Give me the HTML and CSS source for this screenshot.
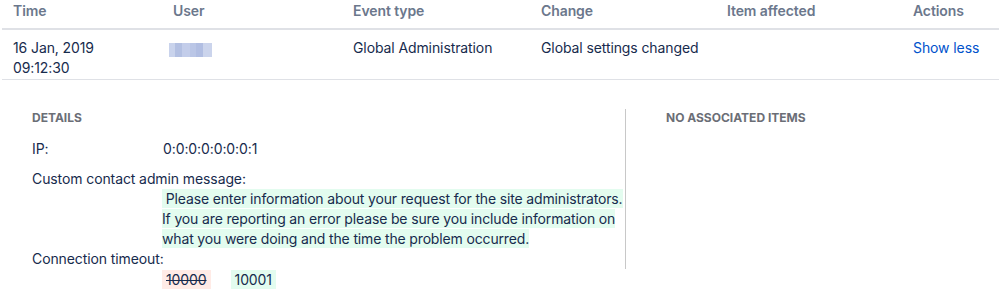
FILE: index.html
```html
<!DOCTYPE html>
<html lang="en">
<head>
  <meta charset="UTF-8" />
  <meta name="viewport" content="width=device-width,initial-scale=1.0" />
  <title>Audit log</title>
  <link rel="stylesheet" href="styles.css">
</head>
<body>
  <table class="audit">
    <thead>
      <tr>
        <th class="col-time">Time</th>
        <th class="col-user">User</th>
        <th class="col-type">Event type</th>
        <th class="col-change">Change</th>
        <th class="col-item">Item affected</th>
        <th class="col-actions">Actions</th>
      </tr>
    </thead>
    <tbody>
      <tr class="entry">
        <td>16 Jan, 2019<br>09:12:30</td>
        <td><span class="blurred" aria-label="hidden user"></span></td>
        <td>Global Administration</td>
        <td>Global settings changed</td>
        <td></td>
        <td><a href="#" class="toggle">Show less</a></td>
      </tr>
    </tbody>
  </table>

  <section class="details">
    <div class="details-main">
      <h2>Details</h2>
      <dl>
        <div class="field inline">
          <dt>IP:</dt>
          <dd>0:0:0:0:0:0:0:1</dd>
        </div>
        <div class="field">
          <dt>Custom contact admin message:</dt>
          <dd class="message"><span class="added">&nbsp;Please enter information about your request for the site administrators.<br>If you are reporting an error please be sure you include information on<br>what you were doing and the time the problem occurred.</span></dd>
        </div>
        <div class="field">
          <dt>Connection timeout:</dt>
          <dd class="diff"><del class="removed">10000</del><span class="added">10001</span></dd>
        </div>
      </dl>
    </div>
    <div class="divider"></div>
    <div class="details-side">
      <h2>No associated items</h2>
    </div>
  </section>
</body>
</html>
```

FILE: styles.css
```css
body {
  margin: 0;
  background: #ffffff;
  color: #172b4d;
  font-family: Inter, "Liberation Sans", Arial, sans-serif;
  font-size: 14px;
  line-height: 20px;
  letter-spacing: -0.1px;
}

/* Table */
.audit {
  width: 997px;
  margin-left: 2px;
  border-collapse: collapse;
  table-layout: fixed;
}
.audit th {
  text-align: left;
  font-weight: 600;
  color: #6b778c;
  padding: 1px 11px 7px;
  border-bottom: 2px solid #dfe1e6;
}
.audit td {
  vertical-align: top;
  padding: 8px 11px 0;
  border-bottom: 1px solid #dfe1e6;
  height: 41px;
}
.col-time { width: 138px; }
.col-user { width: 158px; }
.col-type { width: 166px; }
.col-change { width: 164px; }
.col-item { width: 164px; }

.blurred {
  display: inline-block;
  width: 43px;
  height: 14px;
  margin: 5px 0 0 -4px;
  background: linear-gradient(90deg, #c9d3ec 0 14%, #b3c0e2 14% 30%, #c3cdea 30% 48%, #bac6e6 48% 62%, #b1bee2 62% 80%, #cbd4ec 80%);
  filter: blur(0.6px);
}
.toggle { color: #0052cc; text-decoration: none; }

/* Details */
.details {
  display: flex;
  align-items: flex-start;
  padding: 29px 0 0 32px;
}
.details h2 {
  margin: 0 0 13px;
  font-size: 12px;
  line-height: 16px;
  font-weight: 700;
  letter-spacing: 0;
  text-transform: uppercase;
  color: #6b6e76;
}
.details-main {
  width: 593px;
  padding-top: 1px;
}
.divider {
  width: 1px;
  height: 160px;
  background: #c8c8c8;
}
.details-side { padding: 1px 0 0 40px; }

dl { margin: 0; }
.field.inline { display: flex; margin-bottom: 10px; }
.field.inline dt { width: 131px; }
.field.inline dd { margin: 0; }
dt { margin: 0; }
dd { margin: 0 0 0 130px; }
.message { white-space: nowrap; letter-spacing: -0.15px; }

.added, .removed {
  background: #e3fcef;
  padding: 1px 0;
}
.diff .added, .diff .removed {
  display: inline-block;
  padding: 0 4px;
  line-height: 19px;
  margin-top: 1px;
}
.removed {
  background: #ffebe6;
  text-decoration: line-through;
  margin-right: 20px;
}
```
